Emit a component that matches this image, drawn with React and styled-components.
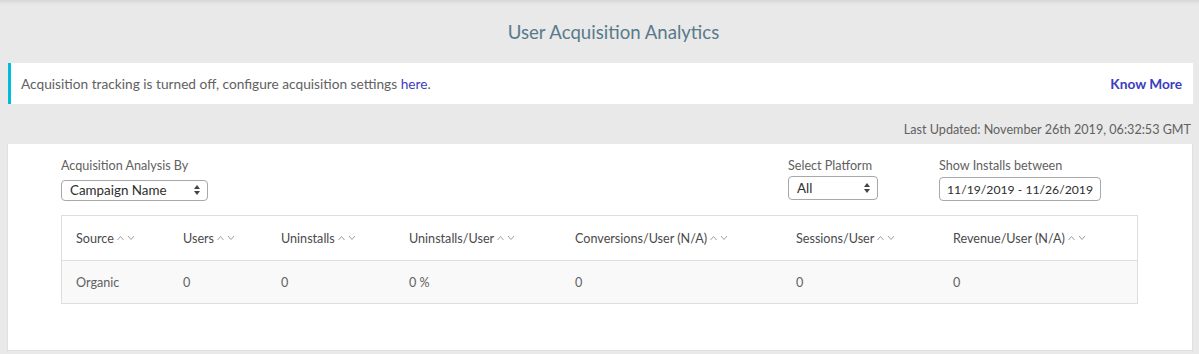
import React from "react";
import styled, { createGlobalStyle } from "styled-components";

const GlobalStyle = createGlobalStyle`
  html, body {
    margin: 0;
    padding: 0;
    background: #e9e9e9;
    font-family: Lato, "Open Sans", "Liberation Sans", sans-serif;
  }
  * {
    box-sizing: border-box;
  }
`;

const Page = styled.div`
  min-height: 354px;
  padding: 0 6px 5px 7px;
  background: linear-gradient(#d6d6d6 0px, #e4e4e4 3px, #e9e9e9 6px) no-repeat;
  background-size: 100% 6px;
  background-color: #e9e9e9;
`;

const Title = styled.h1`
  margin: 0;
  padding: 21px 0 0 27px;
  height: 63px;
  text-align: center;
  font-size: 18.6px;
  font-weight: 400;
  line-height: 22px;
  color: #587a8b;
`;

const Notice = styled.div`
  display: flex;
  align-items: center;
  justify-content: space-between;
  height: 41px;
  padding: 0 11px 0 10px;
  margin-left: 1px;
  background: #fff;
  border-left: 3px solid #00bdd6;
  font-size: 13.7px;
  color: #616161;
`;

const NoticeLink = styled.a`
  color: #3c3cbf;
  text-decoration: none;
  font-weight: ${({ bold }) => (bold ? 700 : 400)};
  cursor: pointer;
`;

const Updated = styled.div`
  text-align: right;
  padding: 19px 2px 0 0;
  height: 40px;
  font-size: 12.6px;
  line-height: 14px;
  color: #616161;
`;

const Card = styled.div`
  background: #fff;
  border: 1px solid #e0e0e0;
  border-top: none;
  padding: 14px 54px 46px 53px;
`;

const Filters = styled.div`
  display: flex;
  align-items: flex-start;
  padding-right: 37px;
`;

const RightFilters = styled.div`
  display: flex;
  gap: 61px;
  margin-left: auto;
`;

const Field = styled.div`
  display: flex;
  flex-direction: column;
`;

const Label = styled.label`
  font-size: 12.6px;
  line-height: 15px;
  color: #616161;
  margin-bottom: ${({ gap }) => gap}px;
`;

const SelectWrap = styled.div`
  position: relative;
  width: ${({ width }) => width}px;
`;

const Select = styled.select`
  appearance: none;
  -webkit-appearance: none;
  width: 100%;
  height: ${({ h }) => h}px;
  padding: 0 20px 0 8px;
  border: 1px solid #a8a8a8;
  border-radius: 4px;
  background: #fff;
  font-family: inherit;
  font-size: 13.4px;
  color: #2e2e2e;
  outline: none;
`;

const Arrows = styled.svg`
  position: absolute;
  right: 8px;
  top: 50%;
  transform: translateY(-50%);
  pointer-events: none;
`;

const DateInput = styled.div`
  display: flex;
  align-items: center;
  justify-content: center;
  width: 162px;
  height: 24px;
  border: 1px solid #a8a8a8;
  border-radius: 4px;
  font-size: 12.2px;
  color: #2e2e2e;
`;

const Table = styled.div`
  margin-top: 14px;
  border: 1px solid #dedede;
`;

const Row = styled.div`
  display: grid;
  grid-template-columns: 107px 98px 128px 166px 221px 157px 1fr;
  align-items: center;
  height: ${({ head }) => (head ? 44 : 43)}px;
  background: ${({ head }) => (head ? "#fff" : "#f9f9f9")};
  border-top: ${({ head }) => (head ? "none" : "1px solid #dedede")};
  font-size: 12.6px;
  color: ${({ head }) => (head ? "#4a4a4a" : "#616161")};
`;

const Cell = styled.div`
  display: flex;
  align-items: center;
  gap: 3px;
  padding-left: 14px;
  white-space: nowrap;
`;

const SortIcon = () => (
  <svg width="18" height="6" viewBox="0 0 18 6" fill="none" stroke="#a0a0a0" strokeWidth="1">
    <polyline points="0.5,5 3.5,1.5 6.5,5" />
    <polyline points="11,1 14,4.5 17,1" />
  </svg>
);

const UpDown = () => (
  <Arrows width="6" height="10" viewBox="0 0 6 10">
    <polygon points="0,4 3,0 6,4" fill="#444" />
    <polygon points="0,6 3,10 6,6" fill="#444" />
  </Arrows>
);

const columns = [
  "Source",
  "Users",
  "Uninstalls",
  "Uninstalls/User",
  "Conversions/User (N/A)",
  "Sessions/User",
  "Revenue/User (N/A)",
];

const values = ["Organic", "0", "0", "0 %", "0", "0", "0"];

export default function App() {
  return (
    <>
      <GlobalStyle />
      <Page>
        <Title>User Acquisition Analytics</Title>
        <Notice>
          <span>
            Acquisition tracking is turned off, configure acquisition settings{" "}
            <NoticeLink>here</NoticeLink>.
          </span>
          <NoticeLink bold>Know More</NoticeLink>
        </Notice>
        <Updated>Last Updated: November 26th 2019, 06:32:53 GMT</Updated>
        <Card>
          <Filters>
            <Field>
              <Label gap={6}>Acquisition Analysis By</Label>
              <SelectWrap width={147}>
                <Select h={21} defaultValue="campaign">
                  <option value="campaign">Campaign Name</option>
                </Select>
                <UpDown />
              </SelectWrap>
            </Field>
            <RightFilters>
              <Field>
                <Label gap={3}>Select Platform</Label>
                <SelectWrap width={90}>
                  <Select h={24} defaultValue="all">
                    <option value="all">All</option>
                  </Select>
                  <UpDown />
                </SelectWrap>
              </Field>
              <Field>
                <Label gap={4}>Show Installs between</Label>
                <DateInput>11/19/2019 - 11/26/2019</DateInput>
              </Field>
            </RightFilters>
          </Filters>
          <Table>
            <Row head>
              {columns.map((c) => (
                <Cell key={c}>
                  {c}
                  <SortIcon />
                </Cell>
              ))}
            </Row>
            <Row>
              {values.map((v, i) => (
                <Cell key={i}>{v}</Cell>
              ))}
            </Row>
          </Table>
        </Card>
      </Page>
    </>
  );
}
